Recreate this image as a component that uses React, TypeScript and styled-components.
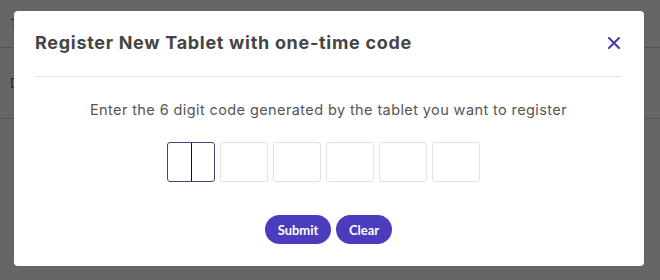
import React from "react";
import styled, { createGlobalStyle } from "styled-components";

const GlobalStyle = createGlobalStyle`
  html, body {
    margin: 0;
    padding: 0;
    width: 660px;
    height: 280px;
    overflow: hidden;
    background: #666666;
  }
  #root {
    width: 660px;
    height: 280px;
    position: relative;
  }
`;

const Backdrop = styled.div`
  width: 660px;
  height: 280px;
  background: #ffffff;
  font-family: "Inter", sans-serif;
  color: #333;
`;

const BackRow = styled.div<{ $h: number }>`
  height: ${(p) => p.$h}px;
  display: flex;
  align-items: center;
  padding-left: 10px;
  border-bottom: 1px solid #d0d0d0;
  font-size: 13px;
  color: #666;
`;

const Overlay = styled.div`
  position: absolute;
  inset: 0;
  background: rgba(0, 0, 0, 0.6);
  display: flex;
  justify-content: flex-start;
  align-items: flex-start;
  padding: 11px 0 0 14px;
`;

const Modal = styled.div`
  width: 630px;
  height: 255px;
  box-sizing: border-box;
  background: #ffffff;
  border-radius: 4px;
  padding: 0 22px 0 21px;
  display: flex;
  flex-direction: column;
  font-family: "Open Sans", sans-serif;
`;

const Header = styled.div`
  display: flex;
  align-items: center;
  justify-content: space-between;
  padding: 20px 0 21px 0;
  border-bottom: 1px solid #e3e3e3;
`;

const Title = styled.h2`
  margin: 0;
  font-family: "Inter", sans-serif;
  font-size: 18px;
  line-height: 24px;
  font-weight: 700;
  letter-spacing: 0.7px;
  color: #454545;
`;

const CloseButton = styled.button`
  border: none;
  background: none;
  padding: 0;
  margin-right: 1px;
  width: 14px;
  height: 14px;
  display: flex;
  align-items: center;
  justify-content: center;
  cursor: pointer;
`;

const Body = styled.div`
  display: flex;
  flex-direction: column;
  align-items: center;
`;

const Prompt = styled.p`
  margin: 22px 0 0 0;
  font-family: "Inter", sans-serif;
  font-size: 14.5px;
  line-height: 22px;
  color: #555555;
  letter-spacing: 0.4px;
`;

const CodeRow = styled.div`
  display: flex;
  gap: 5px;
  margin-top: 21px;
  margin-right: 10px;
`;

const CodeBox = styled.div<{ $active?: boolean }>`
  width: 48px;
  height: 40px;
  box-sizing: border-box;
  border: 1px solid ${(p) => (p.$active ? "#4b4278" : "#e2e2e2")};
  border-radius: 3px;
  background: #fff;
  display: flex;
  justify-content: center;
`;

const Caret = styled.span`
  width: 1px;
  height: 100%;
  background: #111;
`;

const Actions = styled.div`
  display: flex;
  gap: 5px;
  margin-top: 33px;
`;

const PillButton = styled.button<{ $w: number }>`
  width: ${(p) => p.$w}px;
  height: 29px;
  border: none;
  border-radius: 15px;
  background: #4b3bbd;
  color: #ffffff;
  font-family: "Lato", sans-serif;
  font-weight: 700;
  font-size: 13px;
  cursor: pointer;
  padding: 0;
`;

export default function App() {
  const boxes = [0, 1, 2, 3, 4, 5];
  return (
    <>
      <GlobalStyle />
      <Backdrop>
        <BackRow $h={47}>Tr</BackRow>
        <BackRow $h={70}>De</BackRow>
      </Backdrop>
      <Overlay>
        <Modal>
          <Header>
            <Title>Register New Tablet with one-time code</Title>
            <CloseButton aria-label="close">
              <svg width="12" height="12" viewBox="0 0 12 12">
                <path d="M1 1 L11 11 M11 1 L1 11" stroke="#4a3ca8" strokeWidth="2" strokeLinecap="square" />
              </svg>
            </CloseButton>
          </Header>
          <Body>
            <Prompt>Enter the 6 digit code generated by the tablet you want to register</Prompt>
            <CodeRow>
              {boxes.map((i) => (
                <CodeBox key={i} $active={i === 0}>
                  {i === 0 && <Caret />}
                </CodeBox>
              ))}
            </CodeRow>
            <Actions>
              <PillButton $w={66}>Submit</PillButton>
              <PillButton $w={56}>Clear</PillButton>
            </Actions>
          </Body>
        </Modal>
      </Overlay>
    </>
  );
}
